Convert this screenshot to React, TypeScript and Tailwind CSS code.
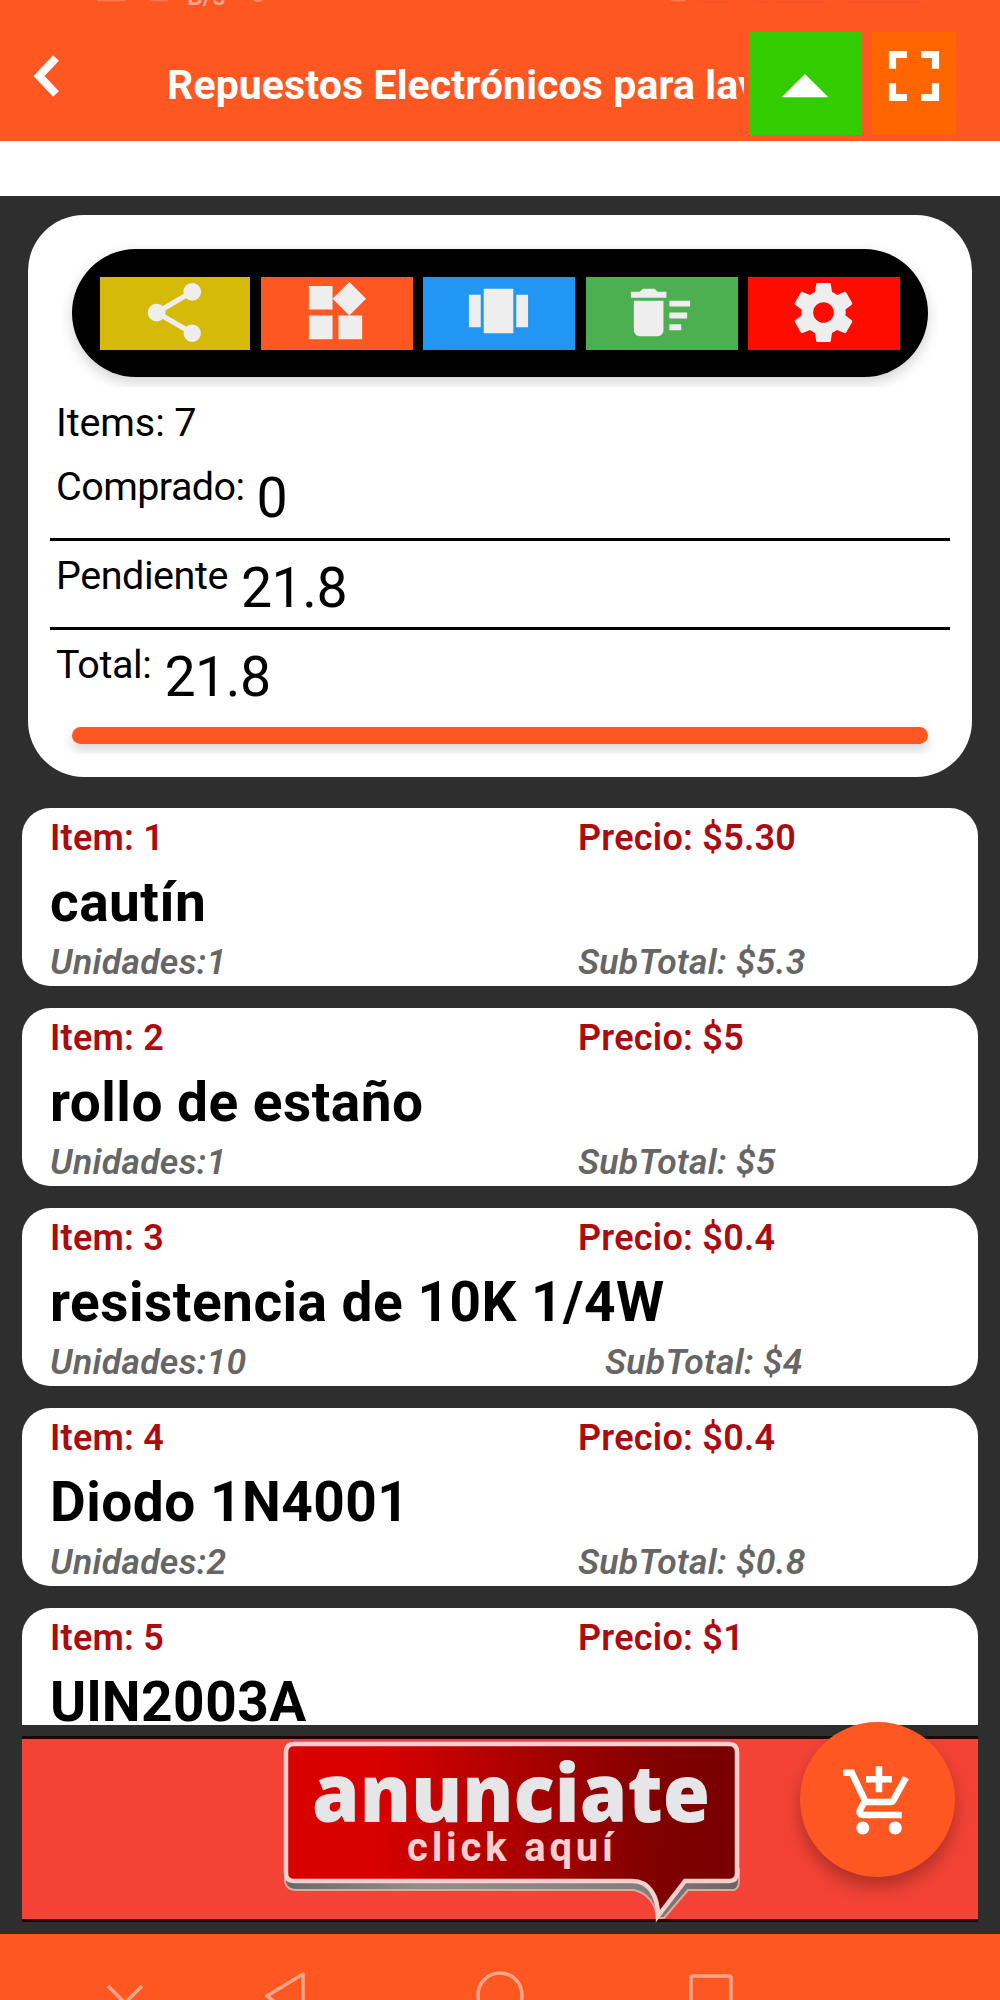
import type { ReactNode } from "react";
import { MdAddShoppingCart, MdArrowDropUp, MdDeleteSweep, MdFullscreen, MdShare, MdWidgets } from "react-icons/md";

const items = [
    { id: 1, name: "cautín", price: "5.30", units: 1, subtotal: "5.3" },
    { id: 2, name: "rollo de estaño", price: "5", units: 1, subtotal: "5" },
    { id: 3, name: "resistencia de 10K 1/4W", price: "0.4", units: 10, subtotal: "4" },
    { id: 4, name: "Diodo 1N4001", price: "0.4", units: 2, subtotal: "0.8" },
    { id: 5, name: "UlN2003A", price: "1", units: 1, subtotal: "1" },
];

const CarouselIcon = () => (
    <svg viewBox="0 0 24 24" fill="currentColor" className="size-[71px]">
        <path d="M7 19h10V4H7v15zm-5-2h4V6H2v11zM18 6v11h4V6h-4z" />
    </svg>
);

const GearIcon = () => (
    <svg viewBox="0 0 24 24" fill="currentColor" className="size-[71px]">
        <path d="M19.43 12.98c.04-.32.07-.64.07-.98s-.03-.66-.07-.98l2.11-1.65c.19-.15.24-.42.12-.64l-2-3.46c-.12-.22-.39-.3-.61-.22l-2.49 1c-.52-.4-1.08-.73-1.69-.98l-.38-2.65C14.46 2.18 14.25 2 14 2h-4c-.25 0-.46.18-.49.42l-.38 2.65c-.61.25-1.17.59-1.69.98l-2.49-1c-.23-.09-.49 0-.61.22l-2 3.46c-.13.22-.07.49.12.64l2.11 1.65c-.04.32-.07.65-.07.98s.03.66.07.98l-2.11 1.65c-.19.15-.24.42-.12.64l2 3.46c.12.22.39.3.61.22l2.49-1c.52.4 1.08.73 1.69.98l.38 2.65c.03.24.24.42.49.42h4c.25 0 .46-.18.49-.42l.38-2.65c.61-.25 1.17-.59 1.69-.98l2.49 1c.23.09.49 0 .61-.22l2-3.46c.12-.22.07-.49-.12-.64l-2.11-1.65zM12 15.5c-1.93 0-3.5-1.57-3.5-3.5s1.57-3.5 3.5-3.5 3.5 1.57 3.5 3.5-1.57 3.5-3.5 3.5z" />
    </svg>
);

const Header = () => (
    <header className="relative flex h-[141px] bg-[#ff5722] text-white overflow-hidden shrink-0">
        {/* bottom edge of the status bar */}
        <svg viewBox="0 0 1000 4" fill="none" stroke="#ff8a64" strokeWidth="1.5" className="absolute left-0 top-0 w-[1000px] h-1">
            <path d="M97 .5h28M150 .5h18" opacity=".6" />
            <path d="M254 0q4 2 8 0" strokeWidth="2" />
            <path d="M671 0q8 1.500 15 0" opacity=".7" />
            <path d="M700 2h26M756 2h10M778 2h46M846 2h74" stroke="#e85a30" opacity=".6" />
        </svg>
        <span className="absolute left-[187px] -top-[16px] text-[25px] leading-[26px] font-medium text-[#ffab90]">B/s</span>
        <svg viewBox="0 0 26 42" fill="none" stroke="currentColor" strokeWidth="8" className="mt-[55px] ml-[33px] w-[26px] h-[42px]">
            <path d="M23 3L6 21l17 18" />
        </svg>
        <h1 className="ml-[108px] mt-[60px] w-[577px] h-[60px] overflow-hidden whitespace-nowrap text-[41px] leading-[51px] font-bold tracking-[0.11px]">
            Repuestos Electrónicos para lavadora
        </h1>
        <button className="ml-[5px] mt-8 w-[112px] h-[103px] bg-[#33cc00] flex justify-center overflow-hidden">
            <MdArrowDropUp className="size-[112px] shrink-0" />
        </button>
        <button className="ml-[11px] mt-8 w-[84px] h-[103px] bg-[#ff6600] flex justify-center">
            <MdFullscreen className="size-[86px] mt-px shrink-0" />
        </button>
    </header>
);

const ToolButton = ({ color, children }: { color: string; children: ReactNode }) => (
    <button className={`flex h-[73px] items-center justify-center overflow-hidden pr-[2px] pb-px text-[#eeeeee] ${color}`}>{children}</button>
);

const Toolbar = () => (
    <div className="h-[172px] px-[44px] pt-[34px] overflow-hidden">
        <div className="grid grid-cols-[150px_152px_152px_152px_152px] h-32 items-center gap-[10.5px] rounded-full bg-black px-7 shadow-[0_5px_14px_rgba(0,0,0,0.18)]">
            <ToolButton color="bg-[#d6ba0a]">
                <MdShare className="size-[71px]" />
            </ToolButton>
            <ToolButton color="bg-[#ff5722]">
                <MdWidgets className="size-[71px]" />
            </ToolButton>
            <ToolButton color="bg-[#2196f3]">
                <CarouselIcon />
            </ToolButton>
            <ToolButton color="bg-[#4caf50]">
                <MdDeleteSweep className="size-[71px]" />
            </ToolButton>
            <ToolButton color="bg-[#fc0d00]">
                <GearIcon />
            </ToolButton>
        </div>
    </div>
);

const Summary = () => (
    <section className="mx-7 mt-[19px] h-[562px] rounded-[56px] bg-white overflow-hidden text-black shrink-0">
        <Toolbar />
        <div className="mx-[22px] px-[6px] h-[61px] pt-[10px] text-[39.5px] leading-[51px] tracking-[-0.1px]">Items: 7</div>
        <div className="mx-[22px] px-[6px] h-[93px] border-b-[3px] border-black flex gap-[12px]">
            <span className="text-[39.5px] leading-[77px] tracking-[-0.55px]">Comprado:</span>
            <span className="text-[55.5px] leading-[102px]">0</span>
        </div>
        <div className="mx-[22px] px-[6px] h-[89px] border-b-[3px] border-black flex gap-[13px]">
            <span className="text-[39.5px] leading-[70px] tracking-[-0.45px]">Pendiente</span>
            <span className="text-[55.5px] leading-[96px] tracking-[-0.5px]">21.8</span>
        </div>
        <div className="mx-[22px] px-[6px] h-[88px] flex gap-[13px]">
            <span className="text-[39.5px] leading-[70px] tracking-[-0.4px]">Total:</span>
            <span className="text-[55.5px] leading-[96px] tracking-[-0.5px]">21.8</span>
        </div>
        <div className="px-[44px] pt-[9px] h-[36px] overflow-hidden">
            <div className="h-[17px] rounded-full bg-[#ff5722] shadow-[0_6px_12px_rgba(0,0,0,0.17)]" />
        </div>
    </section>
);

const ItemCard = ({ item }: { item: (typeof items)[number] }) => (
    <article className="h-[178px] shrink-0 rounded-[28px] bg-white pl-7 overflow-hidden">
        <div className="flex h-[62px] text-[36px] leading-[60px] font-semibold tracking-[0.25px] text-[#ad0b0f]">
            <span className="w-[528px]">Item: {item.id}</span>
            <span>Precio: ${item.price}</span>
        </div>
        <h2 className="h-[68px] text-[55px] leading-[64px] font-bold tracking-[0.48px] text-black whitespace-nowrap">{item.name}</h2>
        <div className="flex h-[48px] text-[35.5px] leading-[49px] font-semibold italic tracking-[0.3px] text-[#666666]">
            <span className={item.units > 9 ? "w-[555px]" : "w-[528px]"}>Unidades:{item.units}</span>
            <span>SubTotal: ${item.subtotal}</span>
        </div>
    </article>
);

const Banner = () => (
    <div className="relative mx-[22px] mt-[11px] h-[186px] shrink-0 border-y-[3px] border-[#250000] bg-[#f44336]">
        <svg viewBox="0 0 460 184" className="absolute left-[260px] top-0 w-[460px] h-[184px]">
            <defs>
                <linearGradient id="bubble" gradientUnits="userSpaceOnUse" x1="0" y1="60" x2="460" y2="90">
                    <stop offset="0.2" stopColor="#d90000" />
                    <stop offset="0.5" stopColor="#ad0000" />
                    <stop offset="0.8" stopColor="#820000" />
                    <stop offset="1" stopColor="#760000" />
                </linearGradient>
                <linearGradient id="edge" x1="0" y1="0" x2="1" y2="0">
                    <stop offset="0" stopColor="#68686b" />
                    <stop offset="0.3" stopColor="#968c8c" />
                    <stop offset="0.8" stopColor="#857c7c" />
                    <stop offset="1" stopColor="#6b6262" />
                </linearGradient>
            </defs>
            <path d="M3 130V143Q5 151 14 151H352C366 154 374 166 375 179H382L406 151H452Q457 149 457 142V130Z" fill="url(#edge)" stroke="#dfa8a4" strokeWidth="2" />
            <path
                d="M12 5H447Q455 5 455 13V134Q455 142 447 142H403L376 177C376 158 368 142 350 142H12Q4 142 4 134V13Q4 5 12 5Z"
                fill="url(#bubble)"
                stroke="#fbd0cc"
                strokeWidth="4.5"
            />
            <text x="30" y="83" textLength="398" lengthAdjust="spacingAndGlyphs" fill="#e6e6e8" className="font-['Open_Sans',sans-serif] text-[79px] font-extrabold">
                anunciate
            </text>
            <text x="125" y="122" textLength="206" fill="#fbcfcf" className="font-['Roboto',sans-serif] text-[40px] font-bold">
                click aquí
            </text>
        </svg>
    </div>
);

const NavBar = () => (
    <nav className="mt-[12px] h-[66px] shrink-0 overflow-hidden bg-[#ff5722]">
        <svg viewBox="0 0 1000 66" fill="none" stroke="#ffa587" strokeWidth="3.5" className="w-full h-[66px]">
            <path d="M108 52l17 17 17-17" />
            <path d="M303 40v50l-36-28z" strokeLinejoin="round" />
            <circle cx="500" cy="61" r="22" />
            <rect x="691" y="42" width="40" height="40" rx="2" />
        </svg>
    </nav>
);

export default function App() {
    return (
        <div className="relative flex h-[2000px] w-[1000px] flex-col overflow-hidden bg-[#2e2e2e] font-['Roboto',sans-serif]">
            <Header />
            <div className="h-[55px] shrink-0 bg-white" />
            <Summary />
            <main className="mx-[22px] mt-[31px] flex h-[917px] shrink-0 flex-col gap-[22px] overflow-hidden">
                {items.map((item) => (
                    <ItemCard key={item.id} item={item} />
                ))}
            </main>
            <Banner />
            <NavBar />
            {/* floating add button */}
            <button className="absolute left-[800px] top-[1722px] flex size-[155px] items-center justify-center rounded-full bg-[#ff5722] pl-[3px] pt-1 text-white shadow-[0_10px_18px_rgba(0,0,0,0.28)]">
                <MdAddShoppingCart className="size-[78px]" />
            </button>
        </div>
    );
}
